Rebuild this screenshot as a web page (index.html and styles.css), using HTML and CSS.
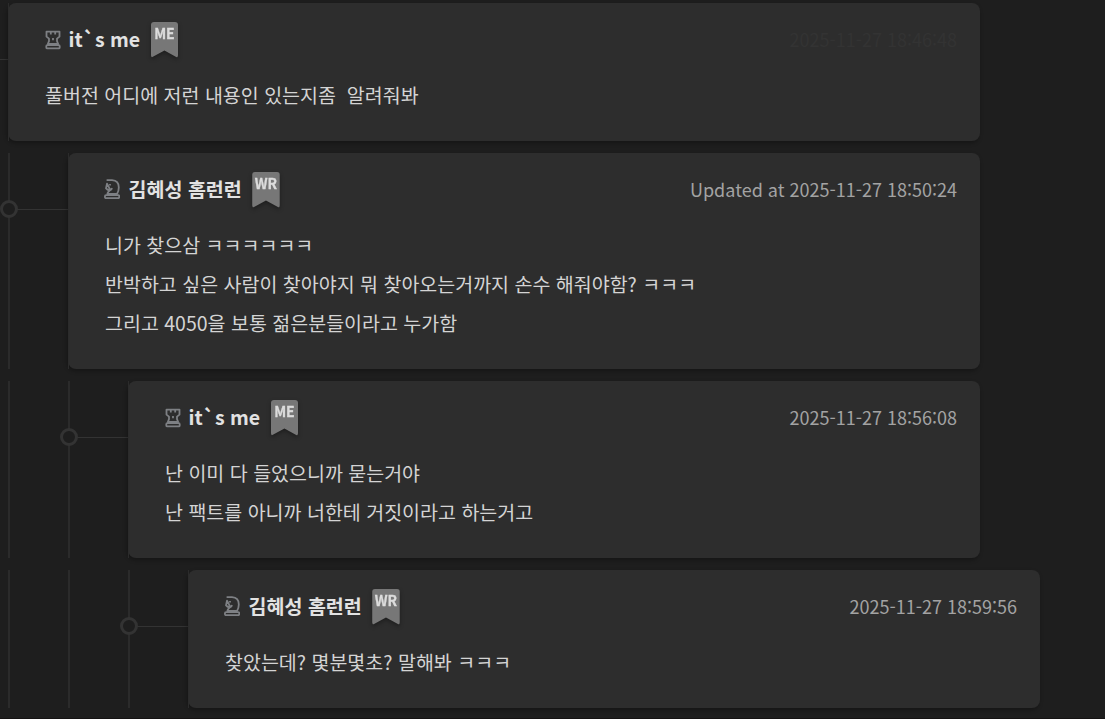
FILE: index.html
```html
<!DOCTYPE html>
<html lang="ko">
<head>
    <meta charset="UTF-8">
    <meta name="viewport" content="width=device-width, initial-scale=1.0">
    <title>Comments</title>
    <link rel="stylesheet" href="styles.css">
</head>
<body>
    <!-- rank icons -->
    <svg class="icon-defs" width="0" height="0">
        <symbol id="rook" viewBox="0 0 16 20">
            <path d="M1.5 1.6H14.5V6.6L12 8.6V11.2L13.2 14H2.8L4 11.2V8.6L1.5 6.6Z"/>
            <path d="M5.8 1.6V4.4M10.2 1.6V4.4M8 8V10.2"/>
            <rect x="1.3" y="15.2" width="13.4" height="3.2" rx="1"/>
        </symbol>
        <symbol id="knight" viewBox="0 0 16 20">
            <path d="M2.6 1.2H8C12.4 1.4 14.8 4.4 14.8 8.5C14.8 11 14.2 13 13 15H3.4C3.4 13 5 12 7.4 10.4L8 9M6 10.3L3.6 10.8L2 9.4L3 4.6Z"/>
            <path d="M6 5V6.6"/>
            <rect x="0.9" y="16.2" width="14.4" height="3" rx="1.2"/>
        </symbol>
    </svg>

    <main class="comments">
        <article class="row">
            <span class="stub"></span>
            <div class="card">
                <header>
                    <svg class="rank"><use href="#rook"/></svg>
                    <strong class="name">it`s me</strong>
                    <span class="badge"><span class="ribbon">ME</span></span>
                    <time class="date faded">2025-11-27 18:46:48</time>
                </header>
                <p>풀버전 어디에 저런 내용인 있는지좀&nbsp; 알려줘봐</p>
            </div>
        </article>

        <article class="row">
            <div class="rail node"></div>
            <div class="card">
                <header>
                    <svg class="rank knight"><use href="#knight"/></svg>
                    <strong class="name">김혜성 홈런런</strong>
                    <span class="badge"><span class="ribbon">WR</span></span>
                    <time class="date">Updated at 2025-11-27 18:50:24</time>
                </header>
                <p>니가 찾으삼 ㅋㅋㅋㅋㅋㅋ<br>반박하고 싶은 사람이 찾아야지 뭐 찾아오는거까지 손수 해줘야함? ㅋㅋㅋ<br>그리고 4050을 보통 젊은분들이라고 누가함</p>
            </div>
        </article>

        <article class="row">
            <div class="rail"></div>
            <div class="rail node"></div>
            <div class="card">
                <header>
                    <svg class="rank"><use href="#rook"/></svg>
                    <strong class="name">it`s me</strong>
                    <span class="badge"><span class="ribbon">ME</span></span>
                    <time class="date">2025-11-27 18:56:08</time>
                </header>
                <p>난 이미 다 들었으니까 묻는거야<br>난 팩트를 아니까 너한테 거짓이라고 하는거고</p>
            </div>
        </article>

        <article class="row deep">
            <div class="rail"></div>
            <div class="rail"></div>
            <div class="rail node"></div>
            <div class="card">
                <header>
                    <svg class="rank knight"><use href="#knight"/></svg>
                    <strong class="name">김혜성 홈런런</strong>
                    <span class="badge"><span class="ribbon">WR</span></span>
                    <time class="date">2025-11-27 18:59:56</time>
                </header>
                <p>찾았는데? 몇분몇초? 말해봐 ㅋㅋㅋ</p>
            </div>
        </article>
    </main>
</body>
</html>
```
FILE: styles.css
```css
body {
    margin: 0;
    height: 719px;
    box-sizing: border-box;
    overflow: hidden;
    background: #1e1e1e;
    border-bottom: 1px solid #151313;
    color: #d4d4d4;
    font-family: "Noto Sans CJK KR", sans-serif;
    font-size: 19.5px;
    line-height: 39px;
}
.icon-defs {
    position: absolute;
}
.comments {
    display: flex;
    flex-direction: column;
    gap: 12px;
    width: 972px;
    padding: 3px 0 0 8px;
}
.row {
    display: flex;
    position: relative;
}
.row.deep {
    width: 1032px;
}
.rail {
    position: relative;
    flex: none;
    width: 60px;
    box-sizing: border-box;
    border-left: 2px solid #2b2b2b;
}
/* line from the thread to the card */
.node::before {
    content: "";
    position: absolute;
    left: 0;
    top: 56px;
    width: 58px;
    height: 1px;
    background: #333;
}
.node::after {
    content: "";
    position: absolute;
    left: -10px;
    top: 47px;
    width: 12px;
    height: 12px;
    border: 3px solid #333;
    border-radius: 50%;
    background: #1e1e1e;
}
.stub {
    position: absolute;
    left: -8px;
    top: 56px;
    width: 8px;
    height: 1px;
    background: #333;
}
.card {
    position: relative;
    flex: 1;
    box-sizing: border-box;
    padding: 16px 23px 27px 37px;
    border-radius: 8px;
    background: #2d2d2d;
    box-shadow: -1px 2px 4px rgba(0, 0, 0, 0.3);
}
/* the thread line runs on along the card edge */
.card::before {
    content: "";
    position: absolute;
    left: 0;
    top: 0;
    bottom: 0;
    width: 1px;
    background: #2b2b2b;
}
.card header {
    display: flex;
    align-items: center;
    height: 39px;
}
.card p {
    margin: 17px 0 0;
}
.rank {
    width: 16px;
    height: 20px;
    margin: 2px 8px 0 0;
    fill: none;
    stroke: #7e8084;
    stroke-width: 1.8;
    stroke-linejoin: round;
}
.rank.knight {
    margin: 1px 9px 0 -1px;
}
.name {
    margin-left: -0.4px;
    color: #e2e2e2;
    font-weight: 700;
}
.badge {
    margin: 3px 0 0 10.5px;
    filter: drop-shadow(0 2px 2px rgba(0, 0, 0, 0.35));
}
.ribbon {
    display: block;
    width: 27.5px;
    height: 36px;
    border-radius: 3px;
    background: #777;
    clip-path: polygon(0 0, 100% 0, 100% 100%, 50% 79%, 0 100%);
    color: #dcdcdc;
    font-size: 14px;
    font-weight: 700;
    line-height: 22px;
    text-align: center;
    -webkit-text-stroke: 0.3px #dcdcdc;
}
.date {
    margin: 2px 0 0 auto;
    color: #a3a3a3;
    font-size: 18px;
}
.date.faded {
    color: #333;
}
```
